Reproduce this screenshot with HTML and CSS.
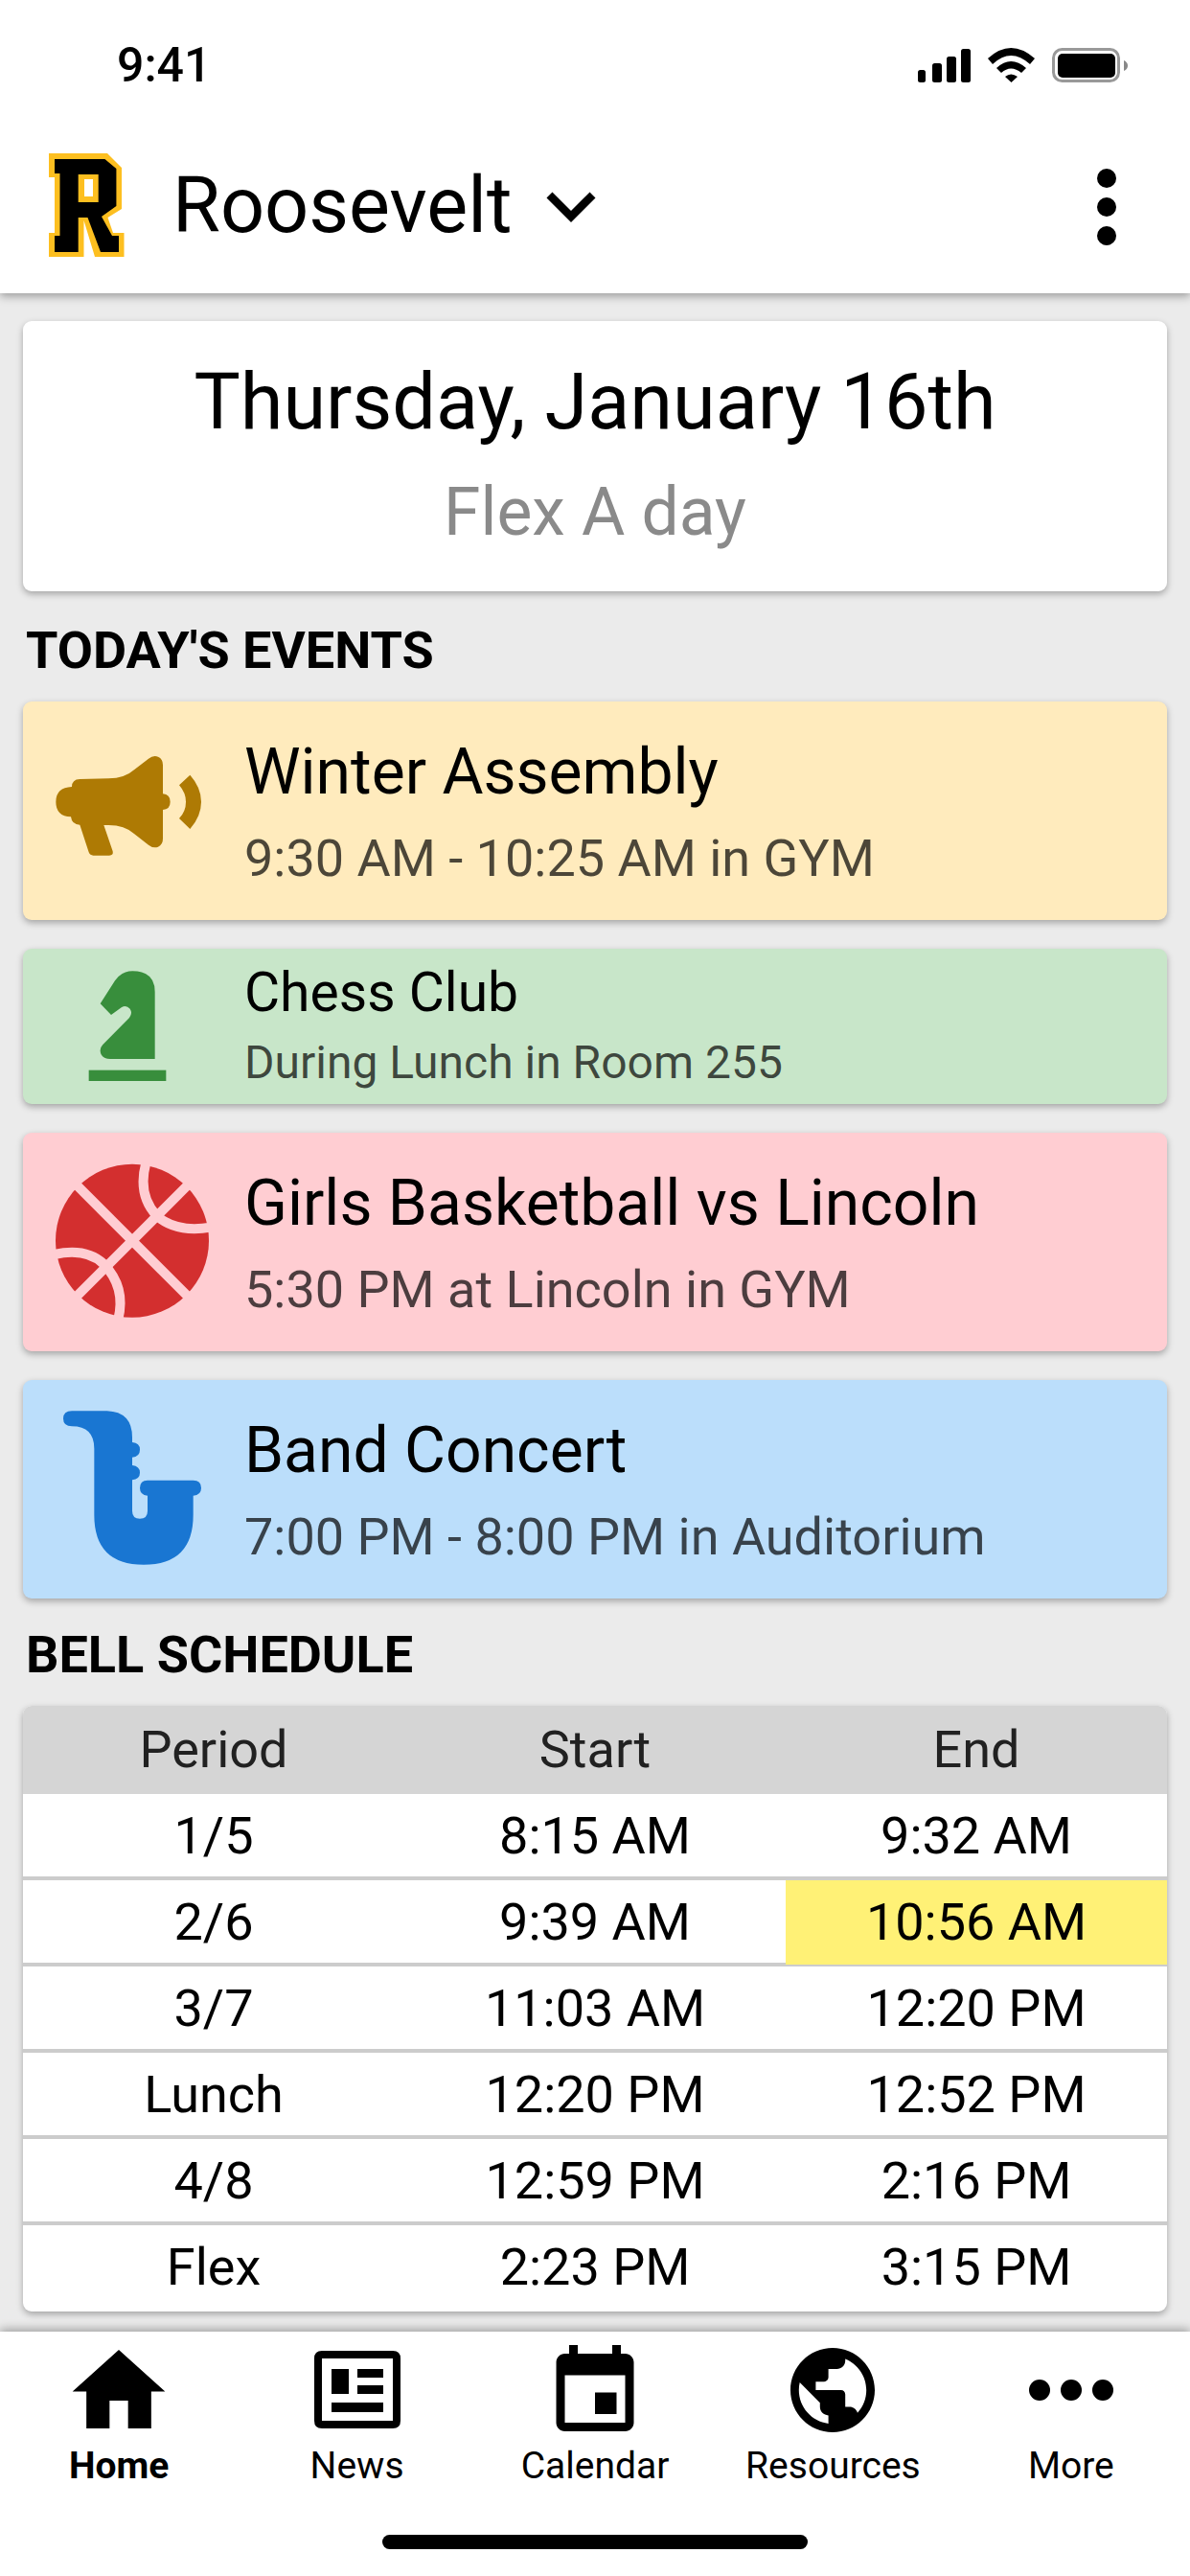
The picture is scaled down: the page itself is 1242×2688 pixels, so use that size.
FILE: index.html
```html
<!DOCTYPE html>
<html lang="en">
<head>
<meta charset="utf-8">
<title>Roosevelt</title>
<link rel="stylesheet" href="styles.css">
</head>
<body>
<div class="app">
  <header class="top">
    <div class="status">
      <span class="time">9:41</span>
      <svg class="status-icons" width="222" height="40" viewBox="955 47 222 40">
        <rect x="958" y="72" width="8" height="13" rx="2.5"/>
        <rect x="973" y="65" width="10" height="20" rx="2.5"/>
        <rect x="988" y="58" width="10" height="27" rx="2.5"/>
        <rect x="1003" y="50" width="10" height="35" rx="2.5"/>
        <path d="M1031 60 Q1055 38 1080 60 L1075 66 Q1055 48 1036 66 Z"/>
        <path d="M1040 70 Q1055 56 1071 70 L1066 75 Q1055 66 1045 75 Z"/>
        <path d="M1049 79 Q1055 74 1062 79 L1055.500 85 Z"/>
        <rect class="batt-frame" x="1099.500" y="50.500" width="68" height="33" rx="9"/>
        <rect x="1104" y="55" width="60" height="25" rx="5"/>
        <path class="batt-nub" d="M1173 62 Q1177 64 1177 67.500 Q1177 71 1173 73 Z"/>
      </svg>
    </div>
    <div class="appbar">
      <svg class="logo" width="80" height="110" viewBox="50 161 80 110">
        <path class="logo-gold" d="M51 162H112L127 177V220L112.500 229L118 245H129.500V270H99L87.500 232V270H51V245H57V187H51Z"/>
        <path d="M57 168H109.400L121.400 178V217L106 228L117 248H124V265H105L91.500 229H81.700V265H57V248H62.500V183H57Z"/>
        <rect class="logo-gold" x="81.700" y="184" width="21" height="29"/>
        <rect class="logo-white" x="88" y="189" width="9" height="18"/>
      </svg>
      <span class="school">Roosevelt</span>
      <svg class="chevron" width="102" height="102" viewBox="0 0 24 24"><path d="M16.590 8.590L12 13.170 7.410 8.590 6 10l6 6 6-6z"/></svg>
      <svg class="kebab" width="20" height="80" viewBox="0 0 20 80">
        <circle cx="10" cy="10" r="10"/><circle cx="10" cy="40" r="10"/><circle cx="10" cy="70" r="10"/>
      </svg>
    </div>
  </header>

  <main class="content">
    <section class="card date-card">
      <div class="date-title">Thursday, January 16th</div>
      <div class="date-sub">Flex A day</div>
    </section>

    <h2 class="heading">TODAY'S EVENTS</h2>

    <div class="events">
      <article class="card event event-yellow">
        <svg class="event-icon" width="180" height="180" viewBox="144 108 540 540">
          <path fill="#ae7a04" d="M225 303Q225 280 250 279L340 277Q390 277 420 250L465 215Q480 203 495 209Q510 215 510 235L510 325Q533 327 533 350Q533 373 510 375L510 465Q510 485 495 491Q480 497 465 485L420 450Q390 423 340 423L325 423L353 505Q356 518 342 518L292 518Q282 518 278 508L250 422Q225 422 222 397Q175 395 175 350Q175 305 225 303Z"/>
          <path fill="#ae7a04" d="M595 266Q630 305 630 350Q630 395 595 435L561 402Q582 380 582 350Q582 322 561 298Z"/>
        </svg>
        <div class="event-text">
          <div class="event-title">Winter Assembly</div>
          <div class="event-sub">9:30 AM - 10:25 AM in GYM</div>
        </div>
      </article>

      <article class="card event event-green event-small">
        <svg class="event-icon" width="180" height="132" viewBox="144 855 540 396">
          <path fill="#388e3c" d="M485 1155L485 945Q485 880 415 880Q380 880 360 910L314 982L348 1017L380 994Q395 985 407 998Q416 1012 405 1026L322 1110Q308 1125 318 1143Q326 1155 345 1155Z"/>
          <rect fill="#388e3c" x="278" y="1190" width="242" height="34"/>
        </svg>
        <div class="event-text">
          <div class="event-title">Chess Club</div>
          <div class="event-sub">During Lunch in Room 255</div>
        </div>
      </article>

      <article class="card event event-red">
        <svg class="event-icon" width="180" height="180" viewBox="144 138 540 540">
          <circle fill="#d32f2f" cx="414" cy="404" r="240"/>
          <g class="ball-seams">
            <path d="M230 220L598 588"/>
            <path d="M598 220L230 588"/>
            <path d="M457 160Q430 260 490 325Q550 380 660 362"/>
            <path d="M170 447Q270 425 325 477Q395 550 370 650"/>
          </g>
        </svg>
        <div class="event-text">
          <div class="event-title">Girls Basketball vs Lincoln</div>
          <div class="event-sub">5:30 PM at Lincoln in GYM</div>
        </div>
      </article>

      <article class="card event event-blue">
        <svg class="event-icon" width="180" height="180" viewBox="144 912 540 540">
          <path fill="#1976d2" d="M225 937L335 937Q414 940 414 1020L414 1035Q438 1037 438 1058Q438 1080 414 1082L414 1107Q438 1110 438 1130Q438 1150 414 1153L414 1250Q414 1274 438 1274Q462 1274 462 1250L462 1202Q438 1200 438 1178Q438 1154 462 1154L605 1154Q630 1154 630 1178Q630 1200 605 1202L605 1262Q605 1418 450 1418Q295 1418 295 1262L295 1055Q295 985 225 985Q198 985 198 961Q198 937 225 937Z"/>
        </svg>
        <div class="event-text">
          <div class="event-title">Band Concert</div>
          <div class="event-sub">7:00 PM - 8:00 PM in Auditorium</div>
        </div>
      </article>
    </div>

    <h2 class="heading">BELL SCHEDULE</h2>

    <section class="card schedule">
      <div class="row row-head"><div>Period</div><div>Start</div><div>End</div></div>
      <div class="row"><div>1/5</div><div>8:15 AM</div><div>9:32 AM</div></div>
      <div class="row"><div>2/6</div><div>9:39 AM</div><div class="now">10:56 AM</div></div>
      <div class="row"><div>3/7</div><div>11:03 AM</div><div>12:20 PM</div></div>
      <div class="row"><div>Lunch</div><div>12:20 PM</div><div>12:52 PM</div></div>
      <div class="row"><div>4/8</div><div>12:59 PM</div><div>2:16 PM</div></div>
      <div class="row row-last"><div>Flex</div><div>2:23 PM</div><div>3:15 PM</div></div>
    </section>
  </main>

  <nav class="tabs">
    <div class="tab-row">
      <div class="tab tab-active">
        <svg class="tab-icon" viewBox="0 -0.090 24 24"><path d="M10 20v-6h4v6h5v-8h3L12 3 2 12h3v8z"/></svg>
        <span>Home</span>
      </div>
      <div class="tab">
        <svg class="tab-icon" viewBox="314 2437 116 116">
          <path fill-rule="evenodd" d="M335 2453H409Q417 2453 417 2461V2526Q417 2534 409 2534H335Q327 2534 327 2526V2461Q327 2453 335 2453ZM335 2461V2526H409V2461Z"/>
          <rect x="345" y="2472" width="18" height="26"/>
          <rect x="372" y="2472" width="27" height="9"/>
          <rect x="372" y="2489" width="27" height="9"/>
          <rect x="345" y="2507" width="54" height="10"/>
        </svg>
        <span>News</span>
      </div>
      <div class="tab">
        <svg class="tab-icon" viewBox="-0.890 -1.220 25.780 25.780"><path d="M17 12h-5v5h5v-5zM16 1v2H8V1H6v2H5c-1.110 0-1.990.9-1.990 2L3 19c0 1.100.89 2 2 2h14c1.100 0 2-.9 2-2V5c0-1.100-.9-2-2-2h-1V1h-2zm3 18H5V8h14v11z"/></svg>
        <span>Calendar</span>
      </div>
      <div class="tab">
        <svg class="tab-icon" viewBox="-1.180 -0.950 26.360 26.360"><path d="M12 2C6.480 2 2 6.480 2 12s4.480 10 10 10 10-4.480 10-10S17.520 2 12 2zm-1 17.930c-3.950-.49-7-3.850-7-7.930 0-.62.08-1.210.21-1.790L9 15v1c0 1.100.9 2 2 2v1.930zm6.900-2.540c-.26-.81-1-1.390-1.900-1.390h-1v-3c0-.55-.45-1-1-1H8v-2h2c.55 0 1-.45 1-1V7h2c1.100 0 2-.9 2-2v-.41c2.930 1.190 5 4.060 5 7.410 0 2.080-.8 3.970-2.100 5.390z"/></svg>
        <span>Resources</span>
      </div>
      <div class="tab">
        <svg class="tab-icon" viewBox="0 0 116 116"><circle cx="25" cy="57" r="11"/><circle cx="58" cy="57" r="11"/><circle cx="91" cy="57" r="11"/></svg>
        <span>More</span>
      </div>
    </div>
    <div class="home-indicator"></div>
  </nav>
</div>
</body>
</html>
```
FILE: styles.css
```css
* { box-sizing: border-box; }
html, body { margin: 0; padding: 0; }
body { font-family: Roboto, "Liberation Sans", sans-serif; color: #000; background: #ebebeb; }

.app { width: 1242px; height: 2688px; display: flex; flex-direction: column; overflow: hidden; background: #ebebeb; }

.top { height: 306px; flex: none; background: #fff; box-shadow: 0 3px 9px rgba(0,0,0,.35); position: relative; z-index: 2; }
.status { height: 130px; padding: 48px 65px 0 122px; display: flex; justify-content: space-between; align-items: flex-start; }
.time { font-size: 50px; font-weight: 500; line-height: 40px; }
.status-icons { display: block; }
.batt-frame { fill: none; stroke: #999; stroke-width: 3px; }
.batt-nub { fill: #888; }

.appbar { height: 176px; display: flex; align-items: center; padding: 0 77px 0 50px; position: relative; }
.logo { display: block; flex: none; margin-top: -8px; }
.logo-gold { fill: #fdbf20; }
.logo-white { fill: #fff; }
.school { font-size: 81px; line-height: 90px; margin-left: 50px; margin-top: -6px; }
.chevron { margin-left: 11px; margin-top: -6px; flex: none; }
.kebab { margin-left: auto; margin-top: -4px; flex: none; }

.content { flex: 1; min-height: 0; padding: 29px 24px 0; overflow: hidden; }

.card { border-radius: 9px; box-shadow: 0 3px 7px rgba(0,0,0,.3); }
.date-card { height: 282px; background: #fff; margin-bottom: 3px; text-align: center; padding-top: 35px; }
.date-title { font-size: 81px; line-height: 100px; }
.date-sub { font-size: 69.5px; line-height: 100px; color: #8a8a8a; margin-top: 15px; }

.heading { height: 112px; margin: 0; padding: 0 0 0 3px; font-size: 54px; font-weight: 700; line-height: 117px; }

.events { display: flex; flex-direction: column; gap: 30px; }
.event { height: 228px; display: flex; align-items: center; padding-left: 24px; }
.event-small { height: 162px; }
.event-yellow { background: #ffebbd; }
.event-green { background: #c8e6c9; }
.event-red { background: #ffcdd2; }
.event-blue { background: #bbdefb; }
.event-icon { display: block; flex: none; margin-right: 27px; }
.ball-seams path { fill: none; stroke: #ffcdd2; stroke-width: 30px; }
.event-text { display: flex; flex-direction: column; padding-top: 12px; }
.event-title { font-size: 66px; line-height: 88px; margin-top: -2px; margin-bottom: 2px; }
.event-sub { font-size: 54px; line-height: 88px; color: rgba(0,0,0,.7); }
.event-small .event-text { padding-top: 4px; }
.event-small .event-title { font-size: 57px; line-height: 71px; }
.event-small .event-sub { font-size: 48px; line-height: 71px; }

.schedule { background: #fff; overflow: hidden; height: 632px; }
.row { display: grid; grid-template-columns: repeat(3, 1fr); height: 90px; border-bottom: 4px solid #ccc; text-align: center; font-size: 54px; line-height: 88px; }
.row-head { height: 92px; border-bottom: 0; background: #d5d5d5; color: #212121; line-height: 92px; }
.row-last { border-bottom: 0; }
.now { background: #fff176; }

.tabs { height: 255px; flex: none; background: #fff; box-shadow: 0 -3px 9px rgba(0,0,0,.3); position: relative; z-index: 2; padding-top: 4px; }
.tab-row { display: grid; grid-template-columns: repeat(5, 1fr); }
.tab { display: flex; flex-direction: column; align-items: center; font-size: 39px; line-height: 46px; }
.tab-icon { display: block; width: 116px; height: 116px; }
.tab span { margin-top: -3px; }
.tab-active { font-weight: 700; }
.home-indicator { width: 444px; height: 15px; border-radius: 8px; background: #000; margin: 49px auto 0; }
```
